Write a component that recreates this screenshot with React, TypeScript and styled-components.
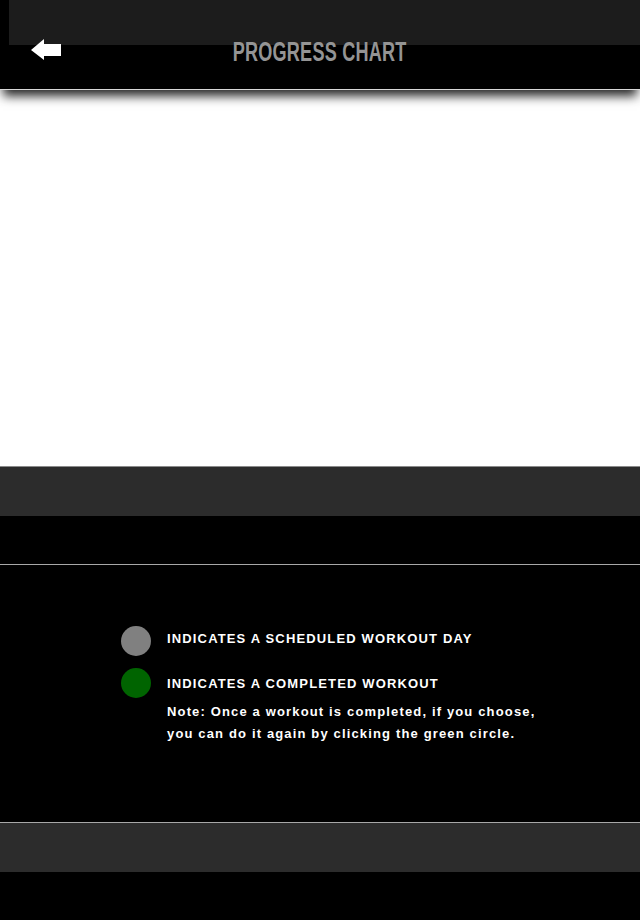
import React from "react";
import styled, { createGlobalStyle } from "styled-components";

const Global = createGlobalStyle`
  html, body { margin: 0; padding: 0; background: #000; }
  body { font-family: "Liberation Sans", Arial, sans-serif; }
`;

const Page = styled.div`
  width: 640px;
  min-height: 920px;
  background: #000;
  display: flex;
  flex-direction: column;
`;

const Header = styled.header`
  position: relative;
  z-index: 2;
  height: 90px;
  border-bottom: 1px solid #d8d8d8;
  background: linear-gradient(#1c1c1c, #1c1c1c) no-repeat 9px 0 / calc(100% - 9px) 45px, #000;
  box-shadow: 0 9px 10px -3px rgba(0, 0, 0, 0.85);
  display: grid;
  grid-template-columns: 1fr auto 1fr;
  align-items: start;
  padding-top: 39px;
  box-sizing: border-box;
`;

const BackButton = styled.button`
  justify-self: start;
  margin-left: 31px;
  padding: 0;
  border: 0;
  background: none;
  width: 30px;
  height: 21px;
  display: block;
  cursor: pointer;
`;

const Title = styled.h1`
  margin: 0;
  font-family: "Liberation Sans", Arial, sans-serif;
  font-weight: bold;
  font-size: 27px;
  line-height: 27px;
  color: #949494;
  letter-spacing: 0.3px;
  transform: scaleX(0.67);
  transform-origin: center;
  white-space: nowrap;
`;

const ChartArea = styled.section`
  height: 376px;
  background: #fff;
`;

const Band = styled.div<{ $line: string }>`
  height: 49px;
  background: #2c2c2c;
  border-top: 1px solid ${(p) => p.$line};
`;

const Spacer = styled.div`
  height: 48px;
  background: #000;
`;

const Legend = styled.section`
  border-top: 1px solid #a8a8a8;
  padding: 61px 0 0 121px;
  box-sizing: border-box;
  height: 258px;
  display: flex;
  flex-direction: column;
  gap: 12px;
`;

const LegendRow = styled.div`
  display: flex;
  align-items: center;
  gap: 16px;
`;

const Dot = styled.span<{ $color: string }>`
  width: 30px;
  height: 30px;
  border-radius: 50%;
  background: ${(p) => p.$color};
  flex: none;
`;

const LegendLabel = styled.span<{ $shift?: number }>`
  color: #fff;
  font-weight: bold;
  font-size: 13px;
  letter-spacing: 1.15px;
  margin-top: ${(p) => p.$shift ?? 0}px;
  white-space: nowrap;
`;

const Note = styled.p`
  margin: -9px 0 0 46px;
  color: #fff;
  font-weight: bold;
  font-size: 13px;
  line-height: 22px;
  letter-spacing: 1.15px;
  width: 420px;
  white-space: nowrap;
`;

export default function App() {
  return (
    <Page>
      <Global />
      <Header>
        <BackButton aria-label="Back">
          <svg width="30" height="21" viewBox="0 0 30 21">
            <polygon points="0,11 13,0 13,5 30,5 30,17 13,17 13,21" fill="#fff" />
          </svg>
        </BackButton>
        <Title>PROGRESS CHART</Title>
        <div />
      </Header>
      <ChartArea />
      <Band $line="#8a8a8a" />
      <Spacer />
      <Legend>
        <LegendRow>
          <Dot $color="#808080" />
          <LegendLabel $shift={-6}>INDICATES A SCHEDULED WORKOUT DAY</LegendLabel>
        </LegendRow>
        <LegendRow>
          <Dot $color="#006400" />
          <LegendLabel>INDICATES A COMPLETED WORKOUT</LegendLabel>
        </LegendRow>
        <Note>
          Note: Once a workout is completed, if you choose,
          <br />
          you can do it again by clicking the green circle.
        </Note>
      </Legend>
      <Band $line="#a8a8a8" />
    </Page>
  );
}
